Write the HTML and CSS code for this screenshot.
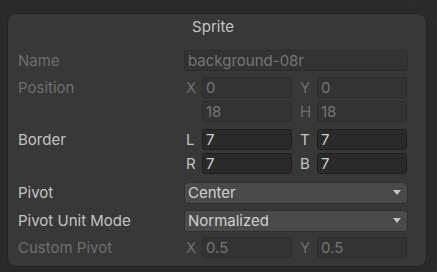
FILE: index.html
```html
<!DOCTYPE html>
<html lang="en">
<head>
    <meta charset="UTF-8">
    <meta name="viewport" content="width=device-width, initial-scale=1.0">
    <title>Sprite</title>
    <link rel="stylesheet" href="styles.css">
</head>
<body>
    <svg class="backdrop" width="437" height="272" viewBox="0 0 437 272">
        <line x1="404" y1="0" x2="437" y2="24" />
        <line x1="418" y1="252" x2="437" y2="268" />
    </svg>

    <div class="panel">
        <div class="title">Sprite</div>

        <div class="row row-name">
            <div class="label disabled">Name</div>
            <div class="value">
                <div class="field disabled">background-08r</div>
            </div>
        </div>

        <div class="row row-position">
            <div class="label disabled">Position</div>
            <div class="value vec">
                <span class="axis disabled">X</span>
                <div class="field disabled">0</div>
                <span class="axis disabled">Y</span>
                <div class="field disabled">0</div>
                <span class="axis"></span>
                <div class="field disabled">18</div>
                <span class="axis disabled">H</span>
                <div class="field disabled">18</div>
            </div>
        </div>

        <div class="row row-border">
            <div class="label">Border</div>
            <div class="value vec">
                <span class="axis">L</span>
                <div class="field edit">7</div>
                <span class="axis">T</span>
                <div class="field edit">7</div>
                <span class="axis">R</span>
                <div class="field edit">7</div>
                <span class="axis">B</span>
                <div class="field edit">7</div>
            </div>
        </div>

        <div class="row row-pivot">
            <div class="label">Pivot</div>
            <div class="value">
                <div class="dropdown">Center<span class="arrow"></span></div>
            </div>
        </div>

        <div class="row row-mode">
            <div class="label">Pivot Unit Mode</div>
            <div class="value">
                <div class="dropdown">Normalized<span class="arrow"></span></div>
            </div>
        </div>

        <div class="row row-custom">
            <div class="label disabled">Custom Pivot</div>
            <div class="value vec">
                <span class="axis disabled">X</span>
                <div class="field disabled">0.5</div>
                <span class="axis disabled">Y</span>
                <div class="field disabled">0.5</div>
            </div>
        </div>
    </div>
</body>
</html>
```

FILE: styles.css
```css
html, body {
    margin: 0;
    padding: 0;
}
body {
    width: 437px;
    height: 272px;
    background-color: #2a2a2a;
    font-family: Inter, "Noto Sans", sans-serif;
    font-size: 15px;
    color: #c4c4c4;
    overflow: hidden;
    position: relative;
}
.backdrop {
    position: absolute;
    left: 0;
    top: 0;
}
.backdrop line {
    stroke: #323232;
    stroke-width: 1;
}
.panel {
    position: relative;
    margin: 13px 10px 0 7px;
    height: 254px;
    box-sizing: border-box;
    background-color: #383838;
    border: 1px solid #222;
    border-radius: 9px;
    padding: 0 18px 0 10px;
}
.title {
    text-align: center;
    height: 28px;
    line-height: 26px;
    color: #c4c4c4;
}
.row {
    display: flex;
    align-items: flex-start;
}
.row-name { margin-top: 8px; }
.row-position { margin-top: 6px; }
.row-border { margin-top: 7px; }
.row-pivot { margin-top: 8px; }
.row-mode { margin-top: 6px; }
.row-custom { margin-top: 5px; }
.label {
    width: 166px;
    line-height: 21px;
    white-space: nowrap;
}
.disabled {
    color: #6f6f6f;
}
.value {
    flex: 1;
}
.vec {
    display: grid;
    grid-template-columns: 18px 90px 25px 90px;
    row-gap: 3px;
}
.axis {
    padding-left: 2px;
    line-height: 21px;
}
.axis:nth-child(4n+3) {
    padding-left: 8px;
}
.field {
    height: 21px;
    box-sizing: border-box;
    border: 1px solid #2c2c2c;
    border-radius: 3px;
    background-color: #333;
    padding: 0 3px;
    line-height: 19px;
    white-space: nowrap;
    overflow: hidden;
}
.field.disabled {
    color: #767676;
}
.field.edit {
    background-color: #2a2a2a;
    border-color: #1e1e1e;
    color: #d2d2d2;
}
.dropdown {
    position: relative;
    height: 22px;
    box-sizing: border-box;
    background-color: #4a4a4a;
    border: 1px solid #2f2f2f;
    border-radius: 3px;
    padding: 0 3px;
    line-height: 20px;
    color: #d0d0d0;
}
.arrow {
    position: absolute;
    right: 6px;
    top: 7px;
    width: 0;
    height: 0;
    border-left: 4.5px solid transparent;
    border-right: 4.5px solid transparent;
    border-top: 5px solid #c4c4c4;
}
```
